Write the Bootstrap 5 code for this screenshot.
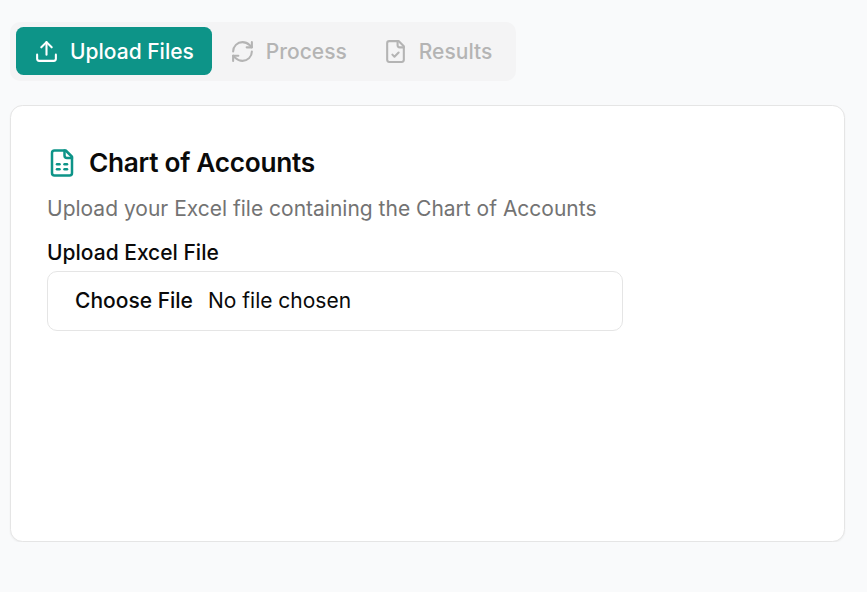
<!DOCTYPE html>
<html lang="en">
<head>
    <meta charset="UTF-8">
    <meta name="viewport" content="width=device-width, initial-scale=1.0">
    <title>Chart of Accounts Upload</title>
    <link href="https://cdn.jsdelivr.net/npm/bootstrap@5.3.0/dist/css/bootstrap.min.css" rel="stylesheet">
    <style>
        body { background: #f9fafb; font-family: 'Inter', sans-serif; color: #0a0a0a; }
        .page-wrap { padding: 22px 22px 0 10px; }
        .tab-strip { background: #f4f4f5; border-radius: 10px; padding: 5px 6px 6px; margin-bottom: 24px; }
        .tab-item { background: transparent; border: 0; border-radius: 7.5px; padding: 0 18px; height: 48px; font-size: 21px; font-weight: 500; line-height: 1; gap: 11px; color: #b4b4b4; }
        .tab-item.is-active { background: #0d9488; color: #fff; }
        .tab-item svg { width: 25px; height: 25px; }
        .upload-card { height: 437px; border: 1px solid #e5e5e5; border-radius: 12.5px; padding: 36px; box-shadow: 0 1px 2px rgba(0,0,0,.05); }
        .card-heading { font-size: 26.25px; font-weight: 600; letter-spacing: -.3px; line-height: 30px; gap: 12px; margin: 6px 0 16px; color: #0a0a0a; }
        .card-heading svg { width: 30px; height: 30px; color: #0d9488; }
        .card-desc { font-size: 21px; line-height: 30px; color: #737373; margin-bottom: 14px; }
        .field-label { font-size: 21px; font-weight: 500; line-height: 30px; margin-bottom: 3px; }
        .file-field { width: 576px; height: 60px; font-size: 21px; border: 1px solid #e5e5e5; border-radius: 10px; padding: 13px 15px; color: #0a0a0a; background: #fff; }
        .file-field::file-selector-button { background: transparent !important; border: 0; font-weight: 500; color: #0a0a0a; padding: 0 15px 0 12px; margin: 0; height: 32px; }
    </style>
</head>
<body>
    <div class="page-wrap">
        <div class="tab-strip d-inline-flex">
            <button class="tab-item is-active d-flex align-items-center" type="button">
                <svg viewBox="0 0 24 24" fill="none" stroke="currentColor" stroke-width="2" stroke-linecap="round" stroke-linejoin="round"><path d="M21 15v4a2 2 0 0 1-2 2H5a2 2 0 0 1-2-2v-4"/><polyline points="17 8 12 3 7 8"/><line x1="12" y1="3" x2="12" y2="15"/></svg>
                Upload Files
            </button>
            <button class="tab-item d-flex align-items-center" type="button">
                <svg viewBox="0 0 24 24" fill="none" stroke="currentColor" stroke-width="2" stroke-linecap="round" stroke-linejoin="round"><path d="M3 12a9 9 0 0 1 9-9 9.75 9.75 0 0 1 6.74 2.74L21 8"/><path d="M21 3v5h-5"/><path d="M21 12a9 9 0 0 1-9 9 9.75 9.75 0 0 1-6.74-2.74L3 16"/><path d="M8 16H3v5"/></svg>
                Process
            </button>
            <button class="tab-item d-flex align-items-center" type="button">
                <svg viewBox="0 0 24 24" fill="none" stroke="currentColor" stroke-width="2" stroke-linecap="round" stroke-linejoin="round"><path d="M15 2H6a2 2 0 0 0-2 2v16a2 2 0 0 0 2 2h12a2 2 0 0 0 2-2V7Z"/><path d="M14 2v4a2 2 0 0 0 2 2h4"/><path d="m9 15 2 2 4-4"/></svg>
                Results
            </button>
        </div>

        <div class="card upload-card">
            <h3 class="card-heading d-flex align-items-center">
                <svg viewBox="0 0 24 24" fill="none" stroke="currentColor" stroke-width="2" stroke-linecap="round" stroke-linejoin="round"><path d="M15 2H6a2 2 0 0 0-2 2v16a2 2 0 0 0 2 2h12a2 2 0 0 0 2-2V7Z"/><path d="M14 2v4a2 2 0 0 0 2 2h4"/><path d="M8 13h2"/><path d="M14 13h2"/><path d="M8 17h2"/><path d="M14 17h2"/></svg>
                Chart of Accounts
            </h3>
            <p class="card-desc">Upload your Excel file containing the Chart of Accounts</p>
            <label class="field-label d-block" for="coa-file">Upload Excel File</label>
            <input class="form-control file-field" id="coa-file" type="file" accept=".xlsx,.xls">
        </div>
    </div>
</body>
</html>
